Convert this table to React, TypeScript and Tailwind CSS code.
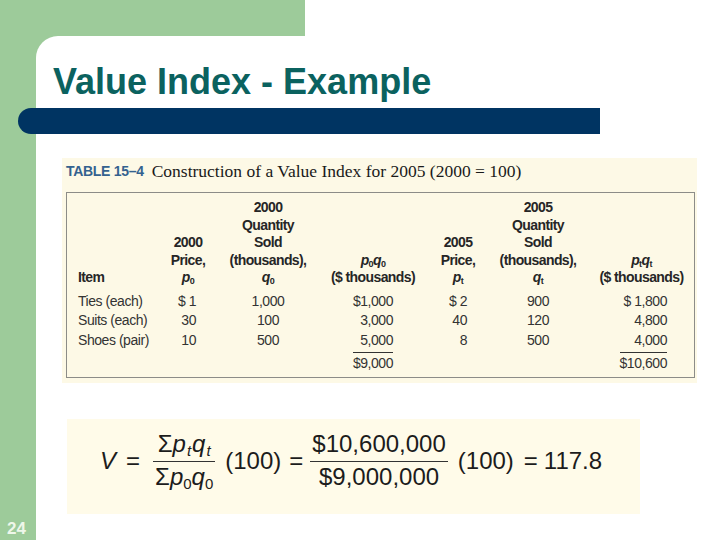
import React from 'react';

const cols = 'grid grid-cols-[91px_60px_100px_110px_60px_100px_107px]';

function Sym({ b, s }: { b: string; s: string }) {
  return (
    <span className="italic">
      {b}
      <sub className="text-[9px] not-italic">{s}</sub>
    </span>
  );
}

function HeadCell({ lines, align = 'center' }: { lines: React.ReactNode[]; align?: 'left' | 'center' }) {
  return (
    <div className={`flex flex-col justify-end ${align === 'left' ? 'items-start pl-[11px]' : 'items-center'}`}>
      {lines.map((l, i) => (
        <div key={i} className="h-[17.5px] leading-[17.5px] whitespace-nowrap">{l}</div>
      ))}
    </div>
  );
}

const rows = [
  ['Ties (each)', '$ 1', '1,000', '$1,000', '$ 2', '900', '$ 1,800'],
  ['Suits (each)', '30', '100', '3,000', '40', '120', '4,800'],
  ['Shoes (pair)', '10', '500', '5,000', '8', '500', '4,000'],
];

function Frac({ num, den }: { num: React.ReactNode; den: React.ReactNode }) {
  return (
    <div className="flex flex-col items-center">
      <div className="h-[24px] leading-[24px] mb-[5px] px-[2px] whitespace-nowrap">{num}</div>
      <div className="w-full h-px bg-[#333]" />
      <div className="h-[24px] leading-[24px] mt-[3px] px-[2px] whitespace-nowrap">{den}</div>
    </div>
  );
}

export default function App() {
  return (
    <div className="w-[720px] h-[540px] bg-white flex flex-col overflow-hidden font-['Liberation_Sans',Arial,sans-serif]">
      {/* top green band */}
      <div className="h-[36px] w-[305px] shrink-0 bg-[#9dcb9a]" />

      <div className="flex flex-1">
        {/* left green strip with slide number */}
        <div className="w-[36px] shrink-0 bg-[#9dcb9a] flex flex-col justify-end pl-[7px] pb-[3px]">
          <span className="text-[17px] leading-[17px] font-bold text-[#eef7ea]">24</span>
        </div>

        <div className="flex-1 bg-[#9dcb9a]">
          <div className="h-full bg-white rounded-tl-[22px] flex flex-col items-start">
            {/* Title */}
            <h1 className="mt-[28px] ml-[17px] text-[36px] leading-[36px] font-bold text-[#0b625f]">
              Value Index - Example
            </h1>
            <div className="mt-[8px] -ml-[18px] w-[582px] h-[26px] rounded-l-[13px] bg-[#003462]" />

            {/* Table */}
            <div className="mt-[24px] ml-[26px] w-[635px] h-[225px] bg-[#fdf9e6] flex flex-col">
              <div className="h-[34px] pb-[8px] pl-[4px] flex items-center whitespace-nowrap">
                <span className="font-bold text-[14px] tracking-[-0.3px] text-[#34628f]">TABLE 15–4</span>
                <span className="ml-[8px] font-['Liberation_Serif',serif] text-[17.5px] text-[#1a1a1a]">
                  Construction of a Value Index for 2005 (2000 = 100)
                </span>
              </div>

              <div className="ml-[4px] mr-[2px] h-[186px] border border-[#8c8c88] text-[14px]">
                <div className={`${cols} pt-[6px] font-bold tracking-[-0.6px] text-[#262626]`}>
                  <HeadCell lines={['Item']} align="left" />
                  <HeadCell lines={['2000', 'Price,', <Sym b="p" s="0" />]} />
                  <HeadCell lines={['2000', 'Quantity', 'Sold', '(thousands),', <Sym b="q" s="0" />]} />
                  <HeadCell lines={[<span><Sym b="p" s="0" /><Sym b="q" s="0" /></span>, '($ thousands)']} />
                  <HeadCell lines={['2005', 'Price,', <Sym b="p" s="t" />]} />
                  <HeadCell lines={['2005', 'Quantity', 'Sold', '(thousands),', <Sym b="q" s="t" />]} />
                  <HeadCell lines={[<span><Sym b="p" s="t" /><Sym b="q" s="t" /></span>, '($ thousands)']} />
                </div>

                <div className="pt-[5px] text-[#333] tracking-[-0.45px]">
                  {rows.map((r) => (
                    <div key={r[0]} className={`${cols} h-[19.5px] leading-[19.5px] whitespace-nowrap`}>
                      <div className="pl-[11px]">{r[0]}</div>
                      <div className="text-right pr-[22px]">{r[1]}</div>
                      <div className="text-center">{r[2]}</div>
                      <div className="text-right pr-[35px]">{r[3]}</div>
                      <div className="text-right pr-[21px]">{r[4]}</div>
                      <div className="text-center">{r[5]}</div>
                      <div className="text-right pr-[28px]">{r[6]}</div>
                    </div>
                  ))}
                  <div className={`${cols} mt-[2px]`}>
                    <div />
                    <div />
                    <div />
                    <div className="text-right pr-[35px]">
                      <span className="inline-block border-t border-[#333] pt-px leading-[19.5px]">$9,000</span>
                    </div>
                    <div />
                    <div />
                    <div className="text-right pr-[28px]">
                      <span className="inline-block border-t border-[#333] pt-px leading-[19.5px]">$10,600</span>
                    </div>
                  </div>
                </div>
              </div>
            </div>

            {/* Formula */}
            <div className="mt-[36px] ml-[31px] w-[573px] h-[95px] bg-[#fffbe9] pt-[13px] pl-[33px] flex items-start text-[24px] text-[#1c1c1c]">
              <div className="flex items-center h-[57px]">
                <span className="italic">V</span>
                <span className="ml-[10px]">=</span>
                <div className="ml-[13px]">
                  <Frac
                    num={<span>Σ<i>p</i><sub className="text-[15px] italic ml-[1px]">t</sub><i className="ml-[1px]">q</i><sub className="text-[15px] italic ml-[1px]">t</sub></span>}
                    den={<span>Σ<i>p</i><sub className="text-[15px]">0</sub><i>q</i><sub className="text-[15px]">0</sub></span>}
                  />
                </div>
                <span className="ml-[10px]">(100)</span>
                <span className="ml-[8px]">=</span>
                <div className="ml-[7px]">
                  <Frac num="$10,600,000" den="$9,000,000" />
                </div>
                <span className="ml-[10px]">(100)</span>
                <span className="ml-[10px]">=</span>
                <span className="ml-[6px]">117.8</span>
              </div>
            </div>
          </div>
        </div>
      </div>
    </div>
  );
}
